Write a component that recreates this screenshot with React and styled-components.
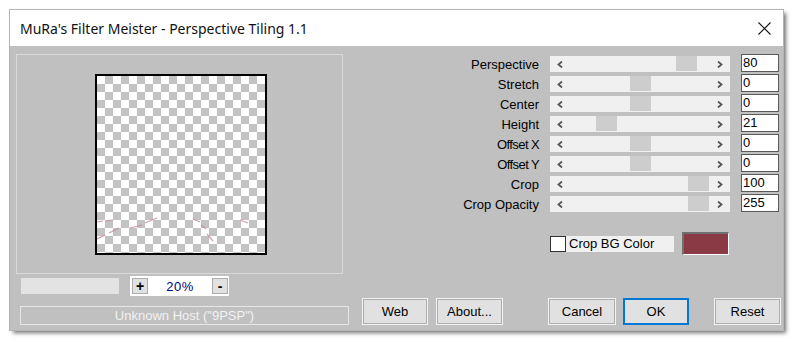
import React from "react"
import styled, { createGlobalStyle } from "styled-components"

const GlobalStyle = createGlobalStyle`
  html, body {
    margin: 0;
    padding: 0;
    background: #ffffff;
  }
  body {
    font-family: "Liberation Sans", Arial, sans-serif;
  }
`

const Page = styled.div`
  width: 795px;
  height: 343px;
  padding: 10px 0 0 10px;
  box-sizing: border-box;
`

const Window = styled.div`
  width: 773px;
  height: 320px;
  background: #c0c0c0;
  box-shadow: 0 0 0 1px #b4b4b4, 3px 3px 4px rgba(0, 0, 0, 0.55);
  display: flex;
  flex-direction: column;
`

const TitleBar = styled.div`
  height: 36px;
  background: #ffffff;
  display: flex;
  align-items: center;
  justify-content: space-between;
  padding: 0 12px 0 10px;
  box-sizing: border-box;
`

const Title = styled.span`
  font-family: "Noto Sans", "Open Sans", sans-serif;
  font-size: 14px;
  color: #111;
  margin-top: 1px;
`

const Body = styled.div`
  flex: 1;
  display: flex;
`

const LeftColumn = styled.div`
  width: 339px;
  padding-left: 6px;
  box-sizing: border-box;
  display: flex;
  flex-direction: column;
`

const GroupBox = styled.div`
  width: 327px;
  height: 220px;
  margin-top: 8px;
  box-sizing: border-box;
  border: 1px solid #dadada;
  display: flex;
  justify-content: center;
  padding: 19px 0 0 3px;
`

const Preview = styled.div`
  position: relative;
  width: 172px;
  height: 181px;
  box-sizing: border-box;
  border: 2px solid #000;
  background: repeating-conic-gradient(#c3c3c3 0 25%, #ffffff 0 50%) 0 0 / 16px 16px;
`

const Streaks = styled.svg`
  position: absolute;
  left: 0;
  top: 0;
`

const ZoomRow = styled.div`
  display: flex;
  align-items: center;
  margin-top: 2px;
  height: 20px;
`

const ProgressBar = styled.div`
  width: 98px;
  height: 16px;
  margin-left: 5px;
  background: #e3e3e3;
`

const ZoomBox = styled.div`
  width: 99px;
  height: 20px;
  margin-left: 11px;
  background: #ffffff;
  display: flex;
  align-items: center;
  justify-content: space-between;
  padding: 0 1px 0 2px;
  box-sizing: border-box;
`

const ZoomButton = styled.div`
  width: 16px;
  height: 16px;
  box-sizing: border-box;
  background: #e1e1e1;
  border: 1px solid #adadad;
  display: flex;
  align-items: center;
  justify-content: center;
  font-family: "Liberation Sans", Arial, sans-serif;
  font-weight: 700;
  font-size: 14px;
  line-height: 1;
  color: #000;
`

const ZoomValue = styled.span`
  font-size: 13px;
  color: #000080;
  letter-spacing: 0.5px;
`

const Status = styled.div`
  width: 329px;
  height: 19px;
  margin: 10px 0 0 4px;
  box-sizing: border-box;
  border: 1px solid #e6e6e6;
  display: flex;
  align-items: center;
  justify-content: center;
  font-size: 13px;
  color: #f2f2f2;
`

const RightColumn = styled.div`
  width: 419px;
  margin-left: 13px;
  display: flex;
  flex-direction: column;
`

const SliderGrid = styled.div`
  margin-top: 8px;
  display: grid;
  grid-template-columns: 1fr 180px 38px;
  grid-auto-rows: 20px;
  column-gap: 11px;
  padding-right: 2px;
`

const Label = styled.div`
  justify-self: end;
  font-size: 13px;
  color: #000;
  line-height: 16px;
  margin-top: 3px;
  letter-spacing: ${p => (p.$tight ? "-0.6px" : "0")};
`

const Track = styled.div`
  position: relative;
  height: 16px;
  margin-top: 2px;
  background: #f0f0f0;
`

const Arrow = styled.svg`
  position: absolute;
  top: 5px;
  ${p => (p.$side === "left" ? "left: 7px;" : "right: 7px;")}
`

const Thumb = styled.div`
  position: absolute;
  top: 0;
  width: 21px;
  height: 15px;
  background: #cdcdcd;
`

const ValueBox = styled.div`
  height: 18px;
  box-sizing: border-box;
  border: 1px solid #5a5a5a;
  background: #fff;
  font-size: 13px;
  line-height: 16px;
  padding-left: 1px;
  color: #000;
`

const CheckRow = styled.div`
  display: flex;
  align-items: center;
  margin: 18px 0 0 188px;
  height: 23px;
`

const CheckBox = styled.div`
  width: 16px;
  height: 16px;
  box-sizing: border-box;
  border: 1px solid #333;
  background: #fff;
`

const CheckLabel = styled.div`
  width: 108px;
  height: 16px;
  background: #f0f0f0;
  font-size: 13px;
  line-height: 16px;
  padding-left: 3px;
  box-sizing: border-box;
  color: #000;
`

const Swatch = styled.div`
  width: 47px;
  height: 23px;
  margin-left: 8px;
  box-sizing: border-box;
  border-top: 2px solid #707070;
  border-left: 2px solid #707070;
  border-right: 1px solid #ffffff;
  border-bottom: 1px solid #ffffff;
  background: #893a45;
`

const ButtonRow = styled.div`
  display: flex;
  margin-top: 43px;
`

const Button = styled.div`
  width: ${p => p.$w}px;
  height: 27px;
  margin-left: ${p => p.$gap || 0}px;
  box-sizing: border-box;
  background: #e1e1e1;
  border: ${p => (p.$primary ? "2px solid #0078d7" : "1px solid #f2f2f2")};
  box-shadow: ${p => (p.$primary ? "none" : "inset 0 0 0 1px #adadad")};
  display: flex;
  align-items: center;
  justify-content: center;
  font-size: 13px;
  color: #000;
`

const sliders = [
  { name: "Perspective", value: "80", pos: 0.875 },
  { name: "Stretch", value: "0", pos: 0.5 },
  { name: "Center", value: "0", pos: 0.5 },
  { name: "Height", value: "21", pos: 0.232 },
  { name: "Offset X", value: "0", pos: 0.5, tight: true },
  { name: "Offset Y", value: "0", pos: 0.5, tight: true },
  { name: "Crop", value: "100", pos: 0.968 },
  { name: "Crop Opacity", value: "255", pos: 0.968 },
]

const Chevron = ({ side }) => (
  <Arrow $side={side} width="6" height="7" viewBox="0 0 6 7">
    <path
      d={side === "left" ? "M5 0.5 L1.5 3.5 L5 6.5" : "M1 0.5 L4.5 3.5 L1 6.5"}
      fill="none"
      stroke="#555"
      strokeWidth="1.8"
    />
  </Arrow>
)

const Slider = ({ pos }) => (
  <Track>
    <Chevron side="left" />
    <Thumb style={{ left: 17 + Math.round(pos * 125) }} />
    <Chevron side="right" />
  </Track>
)

const App = () => {
  return (
    <Page>
      <GlobalStyle />
      <Window>
        <TitleBar>
          <Title>MuRa's Filter Meister - Perspective Tiling 1.1</Title>
          <svg width="13" height="13" viewBox="0 0 13 13">
            <path d="M0.5 0.5 L12.5 12.5 M12.5 0.5 L0.5 12.5" stroke="#111" strokeWidth="1.1" />
          </svg>
        </TitleBar>
        <Body>
          <LeftColumn>
            <GroupBox>
              <Preview>
                <Streaks width="168" height="177" viewBox="0 0 168 177">
                  <g fill="none" stroke="#c58a93" strokeWidth="1.2" opacity="0.8">
                    <path d="M0 146 L6 145 M9 145 L16 144" />
                    <path d="M33 152 L45 149 M48 147 L55 144 L60 142" />
                    <path d="M96 143 L103 146 M104 149 L109 153 M110 158 L116 165" />
                    <path d="M143 144 L151 147" />
                    <path d="M0 163 L8 159 M12 157 L22 152" />
                  </g>
                </Streaks>
              </Preview>
            </GroupBox>
            <ZoomRow>
              <ProgressBar />
              <ZoomBox>
                <ZoomButton>+</ZoomButton>
                <ZoomValue>20%</ZoomValue>
                <ZoomButton>-</ZoomButton>
              </ZoomBox>
            </ZoomRow>
            <Status>Unknown Host ("9PSP")</Status>
          </LeftColumn>
          <RightColumn>
            <SliderGrid>
              {sliders.map(s => (
                <React.Fragment key={s.name}>
                  <Label $tight={s.tight}>{s.name}</Label>
                  <Slider pos={s.pos} />
                  <ValueBox>{s.value}</ValueBox>
                </React.Fragment>
              ))}
            </SliderGrid>
            <CheckRow>
              <CheckBox />
              <CheckLabel>Crop BG Color</CheckLabel>
              <Swatch />
            </CheckRow>
            <ButtonRow>
              <Button $w={66}>Web</Button>
              <Button $w={67} $gap={8}>About...</Button>
              <Button $w={68} $gap={45}>Cancel</Button>
              <Button $w={66} $gap={7} $primary>OK</Button>
              <Button $w={67} $gap={25}>Reset</Button>
            </ButtonRow>
          </RightColumn>
        </Body>
      </Window>
    </Page>
  )
}

export default App
